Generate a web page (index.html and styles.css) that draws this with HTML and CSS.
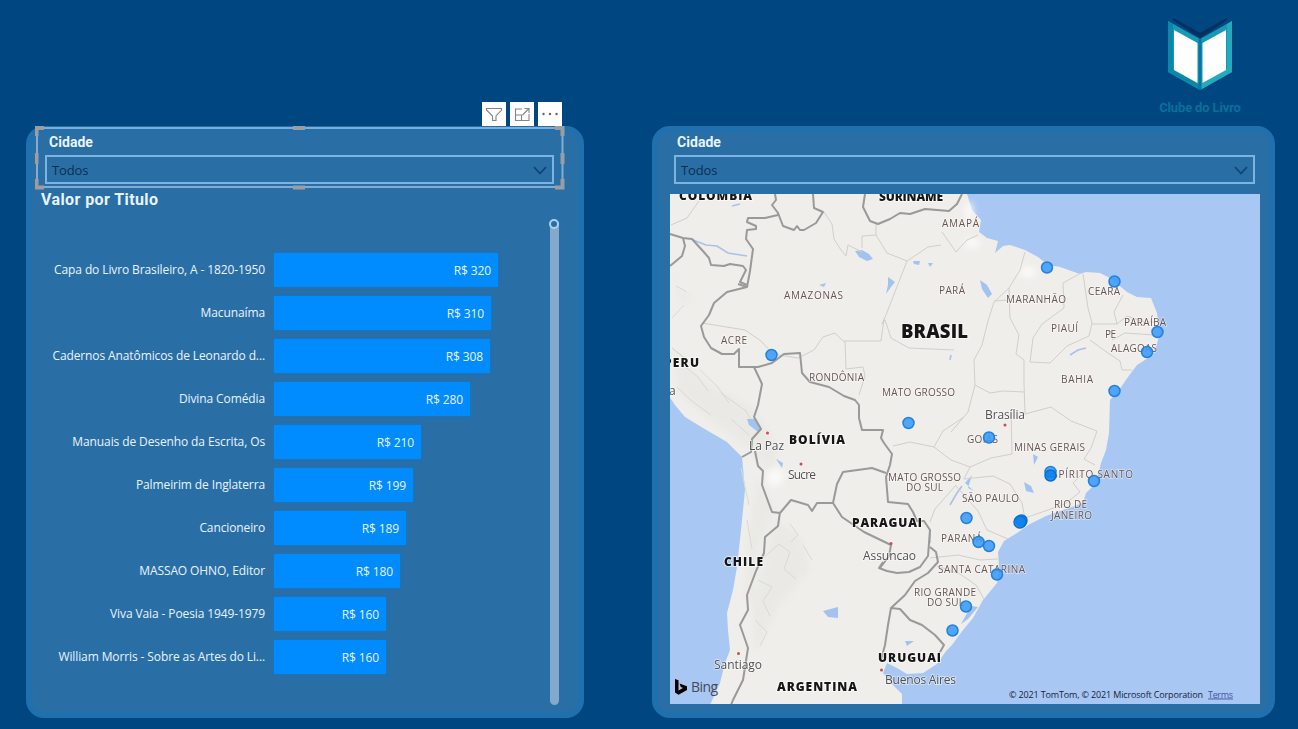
FILE: index.html
```html
<!DOCTYPE html>
<html lang="pt-BR">
<head>
<meta charset="utf-8">
<title>Clube do Livro</title>
<link rel="stylesheet" href="styles.css">
</head>
<body>
<header class="header">
  <div class="brand">
    <svg class="brand-mark" width="68" height="76" viewBox="0 0 68 76">
      <path d="M7 3 34 21 61 3 34 18Z" fill="#052f5e" stroke="#052f5e" stroke-width="2"/>
      <path d="M2 5 34 23 66 5V56L34 74 2 56Z" fill="#1599b5"/>
      <path d="M2 5 7 8V53L34 69V74L2 56Z" fill="#0c87a8"/>
      <path d="M61 8 66 5V56L34 74V69L61 53Z" fill="#24aabe"/>
      <path d="M34 23V74" stroke="#0877a0" stroke-width="3"/>
      <path d="M8 14 31.500 27V67L8 54ZM36.500 27 60 14V54L36.500 67Z" fill="#fff"/>
    </svg>
    <span class="brand-name">Clube do Livro</span>
  </div>
</header>
<main class="panels">
  <section class="panel panel-chart">
    <div class="slicer slicer-selected">
      <h2 class="slicer-title">Cidade</h2>
      <div class="dropdown"><span>Todos</span>
        <svg width="14" height="9" viewBox="0 0 14 9"><path class="chevron" d="M1 1 7 7.500 13 1"/></svg>
      </div>
      <div class="toolbar">
        <span class="tool"><svg width="24" height="22" viewBox="0 0 24 22"><path class="tool-line" d="M4.500 6.500H19.500V8L14 14V18.500H10.500V14L4.500 8Z"/></svg></span>
        <span class="tool"><svg width="24" height="22" viewBox="0 0 24 22"><path class="tool-line" d="M12 7H5.500V18.500H19V12M5.500 13H11.500V18.500M12.500 13 19 6.500M14.500 6.500H19V11"/></svg></span>
        <span class="tool"><svg width="24" height="22" viewBox="0 0 24 22"><g fill="#666"><circle cx="5.500" cy="12" r="1.200"/><circle cx="12" cy="12" r="1.200"/><circle cx="18.500" cy="12" r="1.200"/></g></svg></span>
      </div>
      <svg class="selection" width="530" height="64" viewBox="0 0 530 64">
        <rect x="2" y="2" width="525.500" height="59" fill="none" stroke="#84abd0" stroke-width="2"/>
        <path d="M1.500 10V2H9M258 2H270M520 2H527.500V10M527.500 27V38M527.500 53V61.500H520M270 61.500H258M9 61.500H1.500V53M1.500 38V27" fill="none" stroke="#9b9da3" stroke-width="4"/>
      </svg>
    </div>
    <h2 class="chart-title">Valor por Titulo</h2>
    <div class="chart">
      <div class="rows">
        <div class="row"><span class="label">Capa do Livro Brasileiro, A - 1820-1950</span><span class="bar" style="width:224px">R$ 320</span></div>
        <div class="row"><span class="label">Macunaíma</span><span class="bar" style="width:217px">R$ 310</span></div>
        <div class="row"><span class="label">Cadernos Anatômicos de Leonardo d...</span><span class="bar" style="width:216px">R$ 308</span></div>
        <div class="row"><span class="label">Divina Comédia</span><span class="bar" style="width:196px">R$ 280</span></div>
        <div class="row"><span class="label">Manuais de Desenho da Escrita, Os</span><span class="bar" style="width:147px">R$ 210</span></div>
        <div class="row"><span class="label">Palmeirim de Inglaterra</span><span class="bar" style="width:139px">R$ 199</span></div>
        <div class="row"><span class="label">Cancioneiro</span><span class="bar" style="width:132px">R$ 189</span></div>
        <div class="row"><span class="label">MASSAO OHNO, Editor</span><span class="bar" style="width:126px">R$ 180</span></div>
        <div class="row"><span class="label">Viva Vaia - Poesia 1949-1979</span><span class="bar" style="width:112px">R$ 160</span></div>
        <div class="row"><span class="label">William Morris - Sobre as Artes do Li...</span><span class="bar" style="width:112px">R$ 160</span></div>
      </div>
      <div class="scroll"><span class="scroll-handle"></span></div>
    </div>
  </section>
  <section class="panel panel-map">
    <div class="slicer">
      <h2 class="slicer-title">Cidade</h2>
      <div class="dropdown"><span>Todos</span>
        <svg width="14" height="9" viewBox="0 0 14 9"><path class="chevron" d="M1 1 7 7.500 13 1"/></svg>
      </div>
    </div>
    <svg class="map" width="590" height="510" viewBox="670 194 590 510">
      <defs>
        <filter id="soft"><feGaussianBlur stdDeviation="3"/></filter>
        <filter id="soften"><feGaussianBlur stdDeviation="0.450"/></filter>
      </defs>
      <rect x="670" y="194" width="590" height="511" fill="#a9c7f3"/>
      <g filter="url(#soften)">
      <path fill="#efeeeb" d="M660 184H967V194L972 210 981 220 979 232 987 238 998 241 995 253 1003 246 1010 245 1025 250 1038 257 1048 265 1060 267 1080 274 1086 272 1100 273 1110 278 1127 292 1137 297 1151 298 1157 313 1160 333 1156 347 1148 358 1137 365 1128 377 1119 390 1110 400 1109 433 1106 450 1101 463 1096 483 1086 493 1083 503 1060 511 1046 516 1030 524 1017 533 1004 541 998 552 999 566 997 583 983 600 973 618 963 630 952 645 946 651 937 664 923 673 907 674 897 668 887 663 883 673 893 685 902 694V715H705L710 705 720 683 725 663 730 650 728 630 727 613 733 590 737 567 741 530 745 490 742 457 727 442 703 428 685 417 675 405 669 396H660Z"/>
      <g filter="url(#soft)" fill="#e8e8e3" opacity=".7">
        <path d="M672 350 705 382 754 408 780 450 771 475 750 450 710 420 680 395Z"/>
        <path d="M757 475 775 510 760 545 752 600 745 600 748 540Z"/>
        <path d="M775 520 800 535 810 570 780 605 755 655 752 600 768 550Z"/>
        <path d="M671 265 680 290 695 300 681 305Z"/>
      </g>
      <g fill="#faf9f7" filter="url(#soft)">
        <ellipse cx="775" cy="477" rx="8" ry="9"/><ellipse cx="972" cy="243" rx="8" ry="5"/><ellipse cx="1028" cy="272" rx="8" ry="6"/><ellipse cx="969" cy="211" rx="4" ry="9"/>
      </g>
      <g fill="none" stroke="#dadad5" stroke-width="1">
        <path d="M683 365 698 377 708 391M700 370 717 386 729 403M721 393 746 411 757 430M677 387 693 402 711 415M731 419 749 435M762 559 779 544 790 552 784 569 796 579M758 580 772 587 763 601 770 616M755 620 767 632 760 646M790 524 798 535 791 542M803 545 812 560M676 286 687 292M672 318 684 305M741 468 749 505M747 520 752 549"/>
      </g>
      <g fill="#a3c3ef">
        <path d="M855 251 862 250 869 254 873 259 867 261 859 257Z"/>
        <path d="M913 261H920L919 265 914 264ZM928 263H933L930 267ZM888 277 895 282 891 287 886 294 888 285ZM819 285 826 283 824 287Z"/>
        <path d="M980 280 987 285 992 294 988 298 982 289Z"/>
        <path d="M747 419 754 419 761 429 758 432 749 425ZM776 459 783 463 782 468ZM823 611 838 607V618L828 617ZM905 641 914 641 907 646Z"/>
        <path d="M972 475 965 483 974 491 968 488ZM1024 482 1031 486 1034 493 1026 491ZM1033 454 1038 457 1034 465Z"/>
        <path d="M971 606 978 607 968 619 961 624Z"/>
      </g>
      <g fill="none" stroke="#a9c2ea" stroke-width="1.600">
        <path d="M1070 355 1078 350 1086 348M950 505 957 493 962 486M930 543 930 530M693 240 706 245 717 246 728 253 747 256M732 206 740 204M951 355 950 360"/>
      </g>
      <g fill="none" stroke="#cfcfcc" stroke-width="1">
        <path d="M824 212 832 224 834 239 841 250 846 256 848 245 862 252M862 248 862 236 876 235V223M876 235 887 253 907 261 886 315 882 324 885 320 891 338 909 348 954 350"/>
        <path d="M702 323 745 330 761 341 773 354 798 358 814 350 823 337 835 333 843 341 881 341 884 319M845 341 846 369 863 367 865 376 859 395M907 261 928 247 941 245"/>
        <path d="M942 232 956 252 967 240 978 235M1025 252 1020 270 1009 288 994 302 988 321 982 345 974 360 975 385 968 412 951 432M994 301 1009 300M1009 288 1010 318 1019 335 1016 354 1024 360 1024 382 1025 415"/>
        <path d="M1081 273 1063 283 1064 308 1042 324 1033 338 1030 362 1050 363 1067 346 1089 336 1092 323 1088 308 1083 274M1123 295 1114 312 1117 324 1092 324M1117 324 1127 316 1144 322 1156 322M1112 340 1125 333 1154 335M1090 340 1108 353 1120 361 1122 370 1132 370"/>
        <path d="M975 385 990 393 1003 391 1024 392M1025 414 1051 407 1071 421 1097 431 1091 448 1084 459 1095 465M1011 410 1012 454 991 458 970 467 951 460M970 467 964 479 993 476 1010 484 1022 503 1025 518 1065 504 1080 492 1073 483 1083 473"/>
        <path d="M893 446 910 442 934 447 943 431 964 417M934 447 951 460M956 485 935 509 930 522M956 486 978 511 987 530 1008 539M930 558 958 555 980 560 998 559M937 566 960 574 976 585 984 599"/>
        <path d="M672 348 687 360M701 198 687 218 671 225"/>
      </g>
      <g fill="none" stroke="#999" stroke-width="2" stroke-linejoin="round">
        <path d="M670 266 682 256 685 246 683 238M670 234 683 238 692 239 702 250 709 258 711 265 724 266 730 264 743 266 746 270 740 282 747 285"/>
        <path d="M775 194 776 200 772 205 778 213V215L765 218 748 218 747 222 756 226V229L747 230 746 239 753 249 750 271 747 287 738 284M747 287 727 292 714 303 709 315 701 326 704 337 711 348 722 354 734 354 739 349V367H758L772 363 784 354 800 353 802 373 810 382 829 387 844 396 855 400 859 405 859 418 862 430H883L881 438 884 443 892 454 890 465 886 477 888 502 908 504 913 512 917 521 924 521 930 530 928 556 920 567 909 572 897 573 887 571 879 568 883 562"/>
        <path d="M778 213 783 226 794 230 797 226 800 230 804 230 816 223 823 212 814 208 813 194M865 194 863 207 870 221 878 224 890 219 900 213 910 214 925 209 949 211 957 204 962 194"/>
        <path d="M754 367 762 384 758 405 754 417 761 429 752 439 751 452 742 457M755 451 758 466 763 471 762 485 772 512 780 513 791 500 808 505 812 511 817 503 833 503 837 484 843 472 872 468 886 473M780 512 778 526 765 537 764 553 756 571 747 595 748 610 740 625 748 648 743 680 733 700 731 705"/>
        <path d="M833 503 842 517 864 532 891 545 889 556 880 568M930 547 936 552 938 562 928 573 915 581 905 595 891 608 888 625 885 645 881 660M891 608 900 609 910 620 922 625 935 635 944 645 939 654"/>
      </g>
      </g>
      <g class="map-state" filter="url(#soften)">
        <text x="942" y="227" textLength="37">AMAPÁ</text><text x="784" y="299" textLength="59">AMAZONAS</text><text x="939" y="294" textLength="26">PARÁ</text><text x="1006" y="303" textLength="60">MARANHÃO</text><text x="1088" y="295" textLength="32">CEARÁ</text><text x="1051" y="332" textLength="27">PIAUÍ</text><text x="1105" y="338" textLength="11">PE</text><text x="1124" y="326" textLength="42">PARAÍBA</text><text x="1111" y="352" textLength="46">ALAGOAS</text><text x="721" y="344" textLength="26">ACRE</text><text x="809" y="381" textLength="55">RONDÔNIA</text><text x="882" y="396" textLength="73">MATO GROSSO</text><text x="1061" y="383" textLength="32">BAHIA</text><text x="967" y="443" textLength="31">GOIÁS</text><text x="1014" y="451" textLength="71">MINAS GERAIS</text><text x="1046" y="478" textLength="87">ESPÍRITO SANTO</text><text x="888" y="481" textLength="73">MATO GROSSO</text><text x="906" y="491" textLength="37">DO SUL</text><text x="962" y="502" textLength="57">SÃO PAULO</text><text x="1054" y="508" textLength="33">RIO DE</text><text x="1051" y="519" textLength="41">JANEIRO</text><text x="941" y="542" textLength="41">PARANÁ</text><text x="938" y="573" textLength="87">SANTA CATARINA</text><text x="914" y="596" textLength="62">RIO GRANDE</text><text x="927" y="606" textLength="37">DO SUL</text>
      </g>
      <g class="map-country" filter="url(#soften)">
        <text x="679" y="200" textLength="73">COLOMBIA</text><text x="879" y="201" textLength="64">SURINAME</text><text x="664" y="367" textLength="35">PERU</text><text x="789" y="444" textLength="56">BOLÍVIA</text><text x="852" y="527" textLength="70">PARAGUAI</text><text x="724" y="566" textLength="39">CHILE</text><text x="878" y="662" textLength="63">URUGUAI</text><text x="777" y="691" textLength="80">ARGENTINA</text>
        <text class="map-main" x="901" y="338" textLength="67">BRASIL</text>
      </g>
      <g class="map-city" filter="url(#soften)">
        <text x="985" y="419" textLength="40">Brasília</text><text x="749" y="450" textLength="35">La Paz</text><text x="788" y="479" textLength="28">Sucre</text><text x="863" y="560" textLength="53">Assuncao</text><text x="714" y="669" textLength="48">Santiago</text><text x="885" y="684" textLength="71">Buenos Aires</text><text x="669" y="395">a</text>
      </g>
      <g fill="#cc4a55"><circle cx="1005" cy="425" r="1.500"/><circle cx="767.500" cy="433" r="1.500"/><circle cx="801" cy="464" r="1.500"/><circle cx="891" cy="543.500" r="1.500"/><circle cx="738.500" cy="653.500" r="1.500"/><circle cx="881.500" cy="670" r="1.500"/></g>
      <g class="pins">
        <circle cx="1047" cy="267.500" r="5.500"/><circle cx="1114.500" cy="281.500" r="5.500"/><circle cx="1157.500" cy="332" r="5.500"/><circle cx="1147" cy="352" r="5.500"/><circle cx="1114.500" cy="391" r="5.500"/><circle cx="771.500" cy="355" r="5.500"/><circle cx="908.500" cy="423" r="5.500"/><circle cx="989" cy="437.500" r="5.500"/><circle cx="1050.500" cy="472" r="5.500"/><circle class="pin-dense" cx="1050.500" cy="475.500" r="5.500"/><circle cx="1094" cy="481" r="5.500"/><circle cx="966.500" cy="518" r="5.500"/><circle class="pin-dense" cx="1021.500" cy="520.500" r="5.500"/><circle class="pin-dense" cx="1020" cy="522" r="6"/><circle cx="978.500" cy="542" r="5.500"/><circle cx="989" cy="546" r="5.500"/><circle cx="997" cy="574.500" r="5.500"/><circle cx="966" cy="606.500" r="5.500"/><circle cx="952.500" cy="630.500" r="5.500"/>
      </g>
      <path d="M675 679 678.500 680.300V690.500L683 688 680.800 687 679.500 683.500 687 686.300V690L678.500 694.800 675 692.500Z" fill="#000"/>
      <text class="bing" x="691" y="692" textLength="27">Bing</text>
      <text class="credit" x="1009" y="697.500" textLength="194" xml:space="preserve">© 2021 TomTom, © 2021 Microsoft Corporation</text>
      <text class="credit terms" x="1208" y="697.500" textLength="25">Terms</text>
    </svg>
  </section>
</main>
</body>
</html>
```
FILE: styles.css
```css
* { box-sizing: border-box; }

body {
  width: 1298px;
  height: 729px;
  margin: 0;
  overflow: hidden;
  background: #004680;
  color: #e8f4ff;
  font-family: "Open Sans", "Noto Sans", sans-serif;
}

.header {
  display: flex;
  justify-content: flex-end;
  height: 126px;
  padding: 16px 56px 0 0;
}

.brand {
  display: flex;
  flex-direction: column;
  align-items: center;
  width: 84px;
}

.brand-mark { display: block; filter: blur(0.6px); }

.brand-name {
  margin-top: 7px;
  color: #08709b;
  font: 700 13px/18px Roboto, sans-serif;
  letter-spacing: -0.15px;
  white-space: nowrap;
}

.panels {
  display: flex;
  gap: 68px;
  padding-left: 26px;
}

.panel {
  height: 592px;
  border: 6px solid #2070ad;
  border-radius: 18px;
  background: #2a6ea6;
}

.panel-chart { width: 558px; padding: 0 14px; }
.panel-map { width: 623px; padding: 0 10px 0 12px; }

.slicer { position: relative; height: 62px; padding-top: 1px; }
.panel-map .slicer { padding: 1px 4px 0; }

.slicer-title {
  margin: 0 0 0 3px;
  font: 700 14px/18px Roboto, sans-serif;
  letter-spacing: 0.05px;
}

.dropdown {
  display: flex;
  align-items: center;
  justify-content: space-between;
  height: 29px;
  margin-top: 4px;
  padding: 1px 5px 0 5px;
  border: 2px solid #7fb3df;
  color: #0b2f50;
  font-size: 13px;
  font-weight: 500;
  letter-spacing: -0.15px;
}

.panel-chart .dropdown { width: 509px; margin-left: -1px; }

.chevron {
  fill: none;
  stroke: #0c4475;
  stroke-width: 1.6;
}

.toolbar {
  position: absolute;
  top: -30px;
  left: 436px;
  display: flex;
  gap: 4px;
}

.tool { height: 24px; background: #fff; }
.tool svg { display: block; }

.tool-line {
  fill: none;
  stroke: #858585;
  stroke-width: 1.1;
}

.selection {
  position: absolute;
  top: -6px;
  left: -11px;
}

.chart-title {
  margin: -5px 0 0 -5px;
  font: 700 16px/22px Roboto, sans-serif;
  letter-spacing: 0.4px;
}

.chart {
  display: flex;
  justify-content: space-between;
  height: 495px;
}

.rows {
  display: flex;
  flex-direction: column;
  gap: 9px;
  padding-top: 42px;
}

.row {
  display: flex;
  align-items: center;
  gap: 9px;
  height: 34px;
}

.label {
  width: 219px;
  padding-bottom: 2px;
  font-size: 12px;
  font-weight: 500;
  letter-spacing: -0.11px;
  text-align: right;
  white-space: nowrap;
}

.bar {
  height: 34px;
  padding-right: 7px;
  background: #008cff;
  box-shadow: 0 0 3px #087bd0;
  font-size: 12px;
  font-weight: 500;
  line-height: 36px;
  letter-spacing: -0.1px;
  text-align: right;
}

.scroll {
  position: relative;
  width: 9px;
  height: 485px;
  margin: 9px 5px 0 0;
  border-radius: 5px;
  background: #84a9cb;
}

.scroll-handle {
  position: absolute;
  top: -1px;
  left: -1px;
  width: 10px;
  height: 10px;
  border: 2px solid #a6d4ee;
  border-radius: 50%;
  background: #2a6ea6;
}

.map { display: block; }

.map-state {
  fill: #66544f;
  font-size: 10px;
  font-weight: 500;
  stroke: #fff;
  stroke-width: 1.5px;
  stroke-opacity: 0.5;
  paint-order: stroke;
}

.map-country {
  fill: #151515;
  font-size: 12px;
  font-weight: 800;
  stroke: #fff;
  stroke-width: 2px;
  stroke-opacity: 0.6;
  paint-order: stroke;
}

.map-main { font-size: 18.5px; }

.map-city {
  fill: #505050;
  font-size: 12px;
  font-weight: 500;
  stroke: #fff;
  stroke-width: 1.5px;
  stroke-opacity: 0.6;
  paint-order: stroke;
}

.pins circle {
  fill: #3a9bfb;
  fill-opacity: 0.88;
  stroke: #2580d8;
  stroke-width: 1.5px;
}

.pins .pin-dense { fill: #0d82ee; stroke: #0870d0; }

.bing { fill: #414b5c; font-size: 14px; font-weight: 500; }
.credit { fill: #17233a; font-size: 9px; }
.terms { fill: #4255a0; text-decoration: underline; }
```
